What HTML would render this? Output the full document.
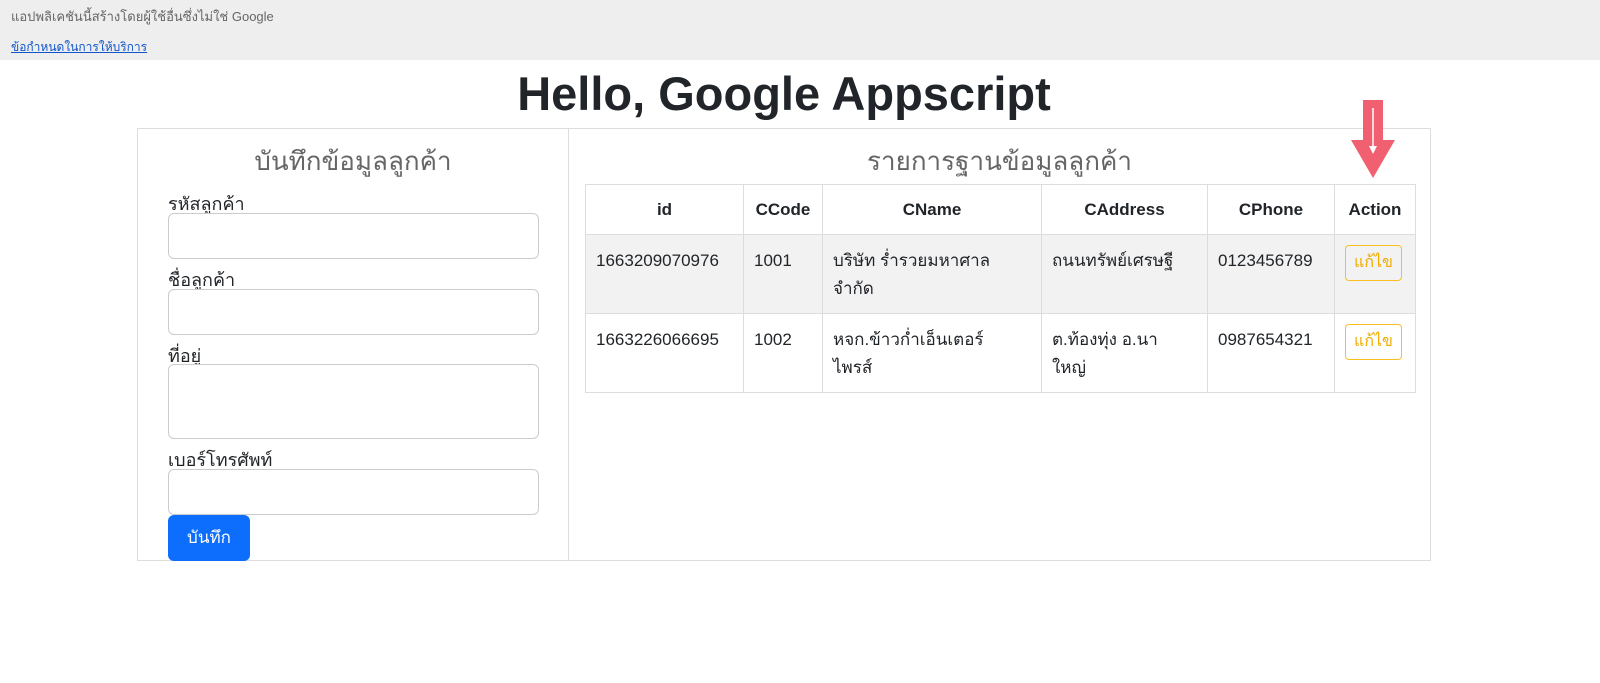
<!DOCTYPE html>
<html><head><meta charset="utf-8"><style>
*{box-sizing:border-box;margin:0;padding:0}
body{width:1600px;height:683px;background:#fff;font-family:"Liberation Sans","DejaVu Sans",sans-serif;color:#212529;position:relative;overflow:hidden}
.top{position:absolute;left:0;top:0;width:1600px;height:60px;background:#eee;font-size:13px;color:#666}
.top .a{position:absolute;left:11px;top:6px}
.top .b{position:absolute;left:11px;top:38px;color:#15c;text-decoration:underline;font-size:12px}
h1{position:absolute;left:0;width:1568px;top:66px;text-align:center;font-size:47px;font-weight:bold;color:#212529}
.box{position:absolute;border:1px solid #ddd}
.lt{left:137px;top:128px;width:432px;height:433px}
.rt{left:568px;top:128px;width:863px;height:433px}
h3{text-align:center;font-size:26px;font-weight:normal;color:#666;margin-top:12px}
label{position:absolute;left:30px;font-size:18px}
.in{position:absolute;left:30px;width:371px;border:1px solid #ccc;border-radius:6px;background:#fff}
.btn{position:absolute;left:30px;top:386px;width:82px;height:46px;background:#0d6efd;color:#fff;border-radius:6px;font-size:17px;text-align:center;line-height:46px}
table{position:absolute;left:16px;top:55px;border-collapse:collapse;font-size:17px}
td,th{border:1px solid #ddd;padding:0 10px;vertical-align:top;text-align:left}
th{text-align:center;height:50px;vertical-align:middle;font-weight:bold}
td{padding-top:12px;height:79px;line-height:28px}
tr.g td{background:#f2f2f2}
.ed{display:inline-block;border:1px solid #fbbf24;color:#f0ad00;border-radius:4px;padding:0 8px;line-height:34px;font-size:16px;margin-top:-2px}
</style></head><body>
<div class="top"><div class="a">แอปพลิเคชันนี้สร้างโดยผู้ใช้อื่นซึ่งไม่ใช่ Google</div><div class="b">ข้อกำหนดในการให้บริการ</div></div>
<h1>Hello, Google Appscript</h1>
<div class="box lt"><h3>บันทึกข้อมูลลูกค้า</h3>
<label style="top:60px">รหัสลูกค้า</label><div class="in" style="top:84px;height:46px"></div>
<label style="top:136px">ชื่อลูกค้า</label><div class="in" style="top:160px;height:46px"></div>
<label style="top:212px">ที่อยู่</label><div class="in" style="top:235px;height:75px"></div>
<label style="top:316px">เบอร์โทรศัพท์</label><div class="in" style="top:340px;height:46px"></div>
<div class="btn">บันทึก</div></div>
<div class="box rt"><h3>รายการฐานข้อมูลลูกค้า</h3>
<table>
<tr><th style="width:158px">id</th><th style="width:79px">CCode</th><th style="width:219px">CName</th><th style="width:166px">CAddress</th><th style="width:127px">CPhone</th><th style="width:81px">Action</th></tr>
<tr class="g"><td>1663209070976</td><td>1001</td><td>บริษัท ร่ำรวยมหาศาล<br>จำกัด</td><td>ถนนทรัพย์เศรษฐี</td><td>0123456789</td><td><span class="ed">แก้ไข</span></td></tr>
<tr><td>1663226066695</td><td>1002</td><td>หจก.ข้าวก่ำเอ็นเตอร์<br>ไพรส์</td><td>ต.ท้องทุ่ง อ.นา<br>ใหญ่</td><td>0987654321</td><td><span class="ed">แก้ไข</span></td></tr>
</table></div>
<svg style="position:absolute;left:1350px;top:98px" width="46" height="82"><path d="M13 2H33V42H45L23 80L1 42H13Z" fill="#f06070"/><path d="M23 10V52" stroke="#fff" stroke-width="1.5"/><path d="M19 48L23 56L27 48Z" fill="#fff"/></svg>
</body></html>
